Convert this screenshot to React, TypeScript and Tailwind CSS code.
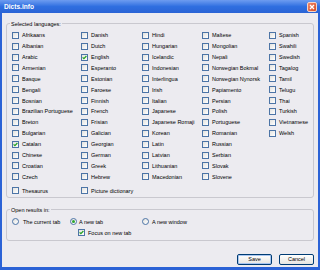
import React from "react";

const languages = [
    "Afrikaans", "Albanian", "Arabic", "Armenian", "Basque", "Bengali", "Bosnian", "Brazilian Portuguese", "Breton", "Bulgarian", "Catalan", "Chinese", "Croatian", "Czech",
    "Danish", "Dutch", "English", "Esperanto", "Estonian", "Faroese", "Finnish", "French", "Frisian", "Galician", "Georgian", "German", "Greek", "Hebrew",
    "Hindi", "Hungarian", "Icelandic", "Indonesian", "Interlingua", "Irish", "Italian", "Japanese", "Japanese Romaji", "Korean", "Latin", "Latvian", "Lithuanian", "Macedonian",
    "Maltese", "Mongolian", "Nepali", "Norwegian Bokmal", "Norwegian Nynorsk", "Papiamento", "Persian", "Polish", "Portuguese", "Romanian", "Russian", "Serbian", "Slovak", "Slovene",
    "Spanish", "Swahili", "Swedish", "Tagalog", "Tamil", "Telugu", "Thai", "Turkish", "Vietnamese", "Welsh",
];

const selected = ["Catalan", "English"];

function Check({ checked }: { checked?: boolean }) {
    return (
        <span className="w-[7px] h-[7px] shrink-0 border border-[#4c74a6] bg-linear-to-br from-[#e2e2df] to-white flex items-center justify-center">
            {checked && (
                <svg width="5" height="5" viewBox="0 0 5 5">
                    <polyline points="0.6,2.4 1.9,3.7 4.4,1" fill="none" stroke="#21a121" strokeWidth="1.2" />
                </svg>
            )}
        </span>
    );
}

function Radio({ checked }: { checked?: boolean }) {
    return (
        <span className="w-[7px] h-[7px] shrink-0 rounded-full border border-[#4c74a6] bg-linear-to-br from-[#e2e2df] to-white flex items-center justify-center">
            {checked && <span className="w-[3px] h-[3px] rounded-full bg-[#2ea52e]" />}
        </span>
    );
}

function Option({ label, checked }: { label: string; checked?: boolean }) {
    return (
        <div className="flex items-center gap-[3px] h-[10.9px] whitespace-nowrap">
            <Check checked={checked} />
            <span>{label}</span>
        </div>
    );
}

export default function App() {
    return (
        <div className="w-[320px] h-[270px] flex flex-col bg-[#2b62d6] font-['Liberation_Sans',Arial,sans-serif] text-[5.5px] leading-[6px] text-black">
            {/* title bar */}
            <div className="h-[13px] shrink-0 flex items-center justify-between pl-[4px] pr-[3px] bg-linear-to-b from-[#6d9cf0] via-[#2f6fe0] to-[#2a63d6]">
                <span className="text-white font-bold text-[6.6px] leading-[7px]">Dicts.info</span>
                <span className="w-[10px] h-[10px] rounded-[2px] border border-[#f4d3c6] bg-linear-to-br from-[#f0876a] to-[#d44a1e] flex items-center justify-center">
                    <svg width="6" height="6" viewBox="0 0 6 6">
                        <path d="M1 1L5 5M5 1L1 5" stroke="white" strokeWidth="1.3" />
                    </svg>
                </span>
            </div>

            {/* body */}
            <div className="flex-1 mx-[2px] mb-[3px] bg-[#ecebf0] flex flex-col px-[4px]">
                <fieldset className="mt-[7.5px] border border-[#c9c8cf] rounded-[3px] px-[5px] pt-[3.3px] pb-[1px]">
                    <legend className="-ml-[2px] px-[1px] leading-[6px]">Selected languages:</legend>
                    <div className="grid grid-flow-col grid-rows-[repeat(14,10.9px)] grid-cols-[69px_61px_60px_67px_1fr]">
                        {languages.map((l) => (
                            <Option key={l} label={l} checked={selected.includes(l)} />
                        ))}
                    </div>
                    <div className="mt-[2.8px] grid grid-cols-[69px_61px_1fr]">
                        <Option label="Thesaurus" />
                        <Option label="Picture dictionary" />
                    </div>
                </fieldset>

                <fieldset className="mt-[9px] border border-[#c9c8cf] rounded-[3px] px-[5px] pt-[3.5px] pb-[1.6px]">
                    <legend className="-ml-[2px] px-[1px] leading-[6px]">Open results in:</legend>
                    <div className="grid grid-cols-[58px_72px_1fr] h-[10.9px] items-center">
                        <div className="flex items-center gap-[4px]">
                            <Radio />
                            <span>The current tab</span>
                        </div>
                        <div className="flex items-center gap-[2px]">
                            <Radio checked />
                            <span>A new tab</span>
                        </div>
                        <div className="flex items-center gap-[3px]">
                            <Radio />
                            <span>A new window</span>
                        </div>
                    </div>
                    <div className="pl-[66px]">
                        <Option label="Focus on new tab" checked />
                    </div>
                </fieldset>

                <div className="mt-[13px] flex justify-end gap-[7px]">
                    <button className="w-[35px] h-[11px] rounded-[2px] border border-[#003c74] bg-linear-to-b from-white to-[#e6e5e0] shadow-[inset_0_0_0_1px_#a9c6f0] leading-[9px]">
                        Save
                    </button>
                    <button className="w-[35px] h-[11px] rounded-[2px] border border-[#003c74] bg-linear-to-b from-white to-[#e6e5e0] leading-[9px]">
                        Cancel
                    </button>
                </div>
            </div>
        </div>
    );
}
